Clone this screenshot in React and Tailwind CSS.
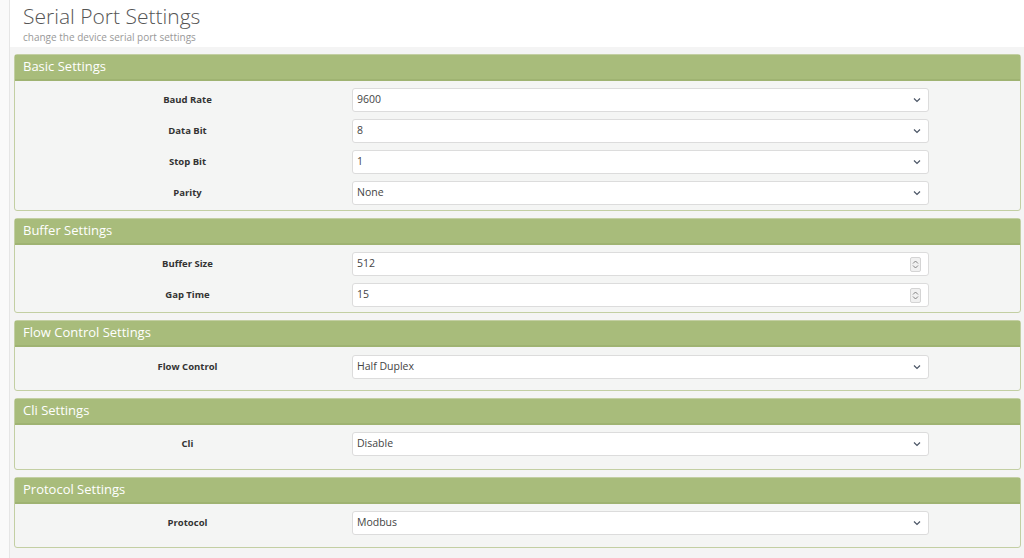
import React from "react";

const sections = [
  {
    title: "Basic Settings",
    pad: "pt-[7px] pb-[5px]",
    fields: [
      { label: "Baud Rate", value: "9600", type: "select" },
      { label: "Data Bit", value: "8", type: "select" },
      { label: "Stop Bit", value: "1", type: "select" },
      { label: "Parity", value: "None", type: "select" },
    ],
  },
  {
    title: "Buffer Settings",
    pad: "pt-[7px] pb-[5px]",
    fields: [
      { label: "Buffer Size", value: "512", type: "number" },
      { label: "Gap Time", value: "15", type: "number" },
    ],
  },
  {
    title: "Flow Control Settings",
    pad: "pt-[8px] pb-[11px]",
    fields: [{ label: "Flow Control", value: "Half Duplex", type: "select" }],
  },
  {
    title: "Cli Settings",
    pad: "pt-[7px] pb-[13px]",
    fields: [{ label: "Cli", value: "Disable", type: "select" }],
  },
  {
    title: "Protocol Settings",
    pad: "pt-[7px] pb-[12px]",
    fields: [{ label: "Protocol", value: "Modbus", type: "select" }],
  },
];

const Chevron = () => (
  <svg width="8" height="6" viewBox="0 0 8 6" className="text-gray-600">
    <path d="M1 1.5 L4 4.5 L7 1.5" fill="none" stroke="currentColor" strokeWidth="1.2" />
  </svg>
);

const Spinner = () => (
  <div className="w-[11px] h-[15px] border border-[#d4d4d4] bg-[#f0f0f0] rounded-[2px] flex flex-col items-center justify-center gap-[1px]">
    <svg width="7" height="4" viewBox="0 0 7 4">
      <path d="M1 3.5 L3.5 1 L6 3.5" fill="none" stroke="#777" strokeWidth="0.9" />
    </svg>
    <svg width="7" height="4" viewBox="0 0 7 4">
      <path d="M1 0.5 L3.5 3 L6 0.5" fill="none" stroke="#777" strokeWidth="0.9" />
    </svg>
  </div>
);

const Field = ({ label, value, type }) => (
  <div className="flex items-center h-[24px]">
    <div className="w-[337px] shrink-0 pl-[8px] text-center text-[9.5px] font-bold text-[#333]">
      {label}
    </div>
    <div className="w-[577px] shrink-0 h-[24px] bg-white border border-[#dcdcdc] rounded-[3px] flex items-center justify-between pl-[4px] pr-[7px]">
      <span className="text-[10.5px] text-[#444]">{value}</span>
      {type === "select" ? <Chevron /> : <Spinner />}
    </div>
  </div>
);

const Panel = ({ title, pad, fields }) => (
  <div className="shrink-0 border border-[#c3cfa3] rounded-[3px] bg-[#f4f5f4]">
    <div className="h-[26px] bg-[#a8bc7b] border-b-2 border-[#9fb372] flex items-center px-[8px] text-white text-[13px]">
      {title}
    </div>
    <div className={`flex flex-col gap-[7px] ${pad}`}>
      {fields.map((f) => (
        <Field key={f.label} {...f} />
      ))}
    </div>
  </div>
);

export default function App() {
  return (
    <div
      className="w-[1024px] h-[558px] overflow-hidden flex bg-[#f4f4f4]"
      style={{ fontFamily: '"Open Sans", "Liberation Sans", sans-serif' }}
    >
      <div className="w-[10px] shrink-0 bg-[#fafafa] border-r border-[#e6e6e6]" />
      <div className="flex-1 flex flex-col min-h-0">
        <div className="h-[47px] shrink-0 bg-white px-[13px] pt-[2px]">
          <h1 className="text-[21px] font-light text-[#555] leading-[28px]">
            Serial Port Settings
          </h1>
          <p className="text-[10px] text-[#999] leading-[14px]">
            change the device serial port settings
          </p>
        </div>
        <div className="flex flex-col gap-[7px] pl-[4px] pr-[3px] pt-[7px]">
          {sections.map((s) => (
            <Panel key={s.title} {...s} />
          ))}
        </div>
      </div>
    </div>
  );
}
